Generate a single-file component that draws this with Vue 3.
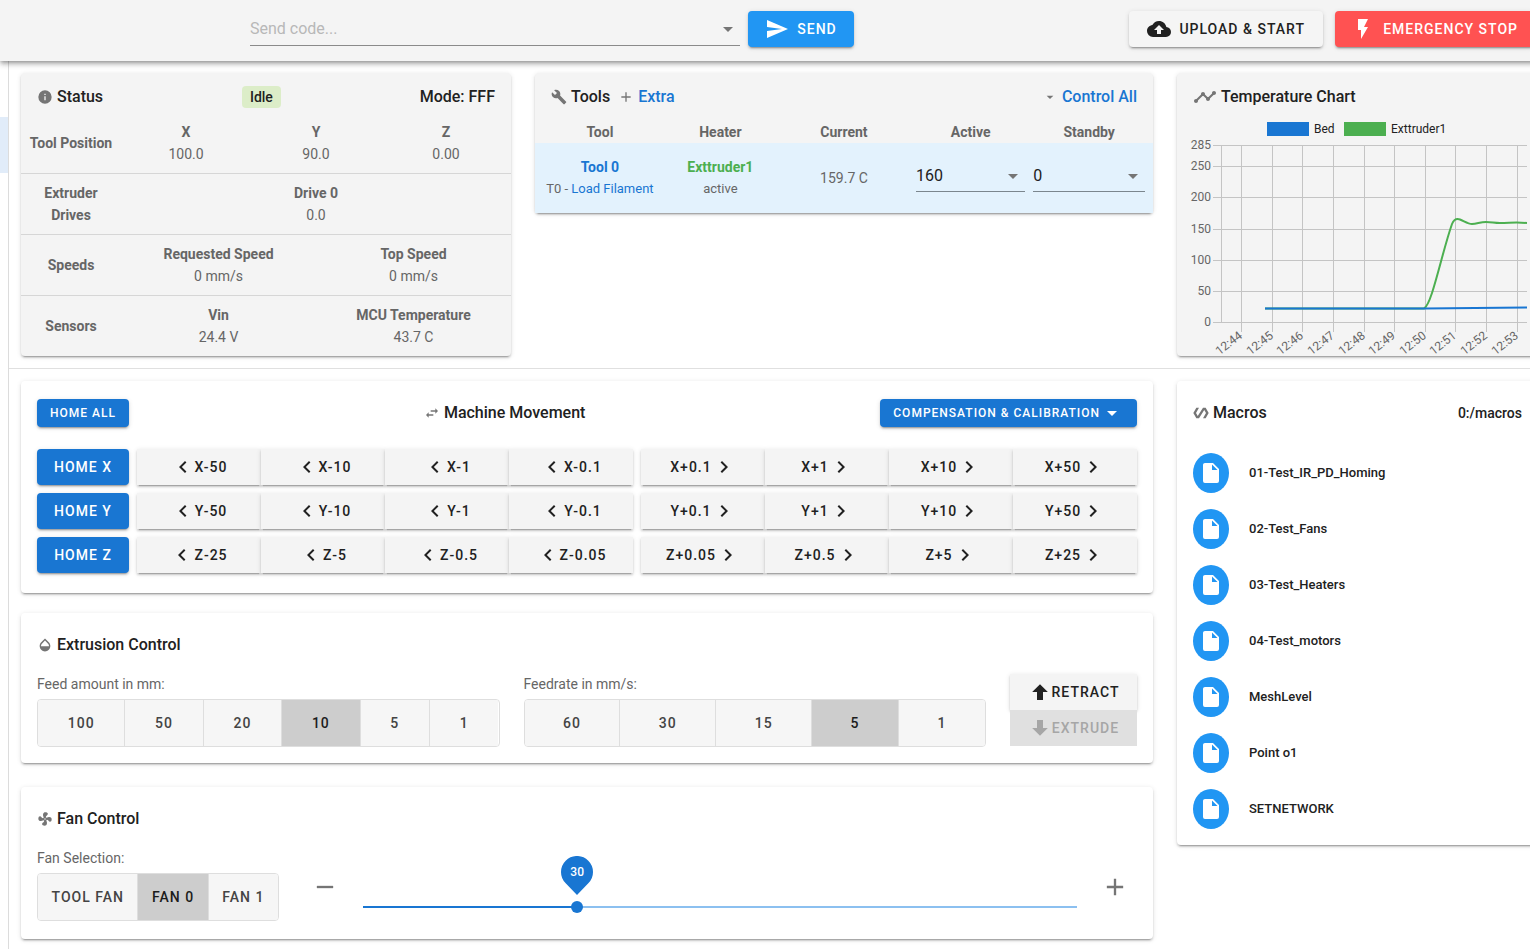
<script setup>
import { ref, computed } from 'vue'

const icons = {
  info: 'M13,9H11V7H13M13,17H11V11H13M12,2A10,10 0 0,0 2,12A10,10 0 0,0 12,22A10,10 0 0,0 22,12A10,10 0 0,0 12,2Z',
  send: 'M2,21L23,12L2,3V10L17,12L2,14V21Z',
  cloud: 'M14,13V17H10V13H7L12,8L17,13M19.35,10.03C18.67,6.59 15.64,4 12,4C9.11,4 6.6,5.64 5.35,8.03C2.34,8.36 0,10.9 0,14A6,6 0 0,0 6,20H19A5,5 0 0,0 24,15C24,12.36 21.95,10.22 19.35,10.03Z',
  flash: 'M7,2V13H10V22L17,10H13L17,2H7Z',
  wrench: 'M22.7,19L13.6,9.9C14.5,7.6 14,4.9 12.1,3C10.1,1 7.1,0.6 4.7,1.7L9,6L6,9L1.6,4.7C0.4,7.1 0.9,10.1 2.9,12.1C4.8,14 7.5,14.5 9.8,13.6L18.9,22.7C19.3,23.1 19.9,23.1 20.3,22.7L22.6,20.4C23.1,20 23.1,19.3 22.7,19Z',
  plus: 'M19,13H13V19H11V13H5V11H11V5H13V11H19V13Z',
  minus: 'M19,13H5V11H19V13Z',
  menuDown: 'M7,10L12,15L17,10H7Z',
  timeline: 'M23,8C23,9.1 22.1,10 21,10C20.82,10 20.65,9.97 20.5,9.93L16.93,13.5C16.97,13.65 17,13.82 17,14C17,15.1 16.1,16 15,16C13.9,16 13,15.1 13,14C13,13.82 13.03,13.65 13.07,13.5L10.5,10.93C10.35,10.97 10.18,11 10,11C9.82,11 9.65,10.97 9.5,10.93L4.93,15.5C4.97,15.65 5,15.82 5,16C5,17.1 4.1,18 3,18C1.9,18 1,17.1 1,16C1,14.9 1.9,14 3,14C3.18,14 3.35,14.03 3.5,14.07L8.07,9.5C8.03,9.35 8,9.18 8,9C8,7.9 8.9,7 10,7C11.1,7 12,7.9 12,9C12,9.18 11.97,9.35 11.93,9.5L14.5,12.07C14.65,12.03 14.82,12 15,12C15.18,12 15.35,12.03 15.5,12.07L19.07,8.5C19.03,8.35 19,8.18 19,8C19,6.9 19.9,6 21,6C22.1,6 23,6.9 23,8Z',
  swap: 'M21,9L17,5V8H10V10H17V13M7,11L3,15L7,19V16H14V14H7V11Z',
  opacity: 'M17.66,8L12,2.35L6.34,8C4.78,9.56 4,11.64 4,13.64C4,15.64 4.78,17.75 6.34,19.31C7.9,20.87 9.95,21.66 12,21.66C14.05,21.66 16.1,20.87 17.66,19.31C19.22,17.75 20,15.64 20,13.64C20,11.64 19.22,9.56 17.66,8M6,14C6,12 6.62,10.73 7.76,9.6L12,5.27L16.24,9.65C17.38,10.77 18,12 18,14H6Z',
  fan: 'M12,11A1,1 0 0,0 11,12A1,1 0 0,0 12,13A1,1 0 0,0 13,12A1,1 0 0,0 12,11M12.5,2C17,2 17.11,5.57 14.75,6.75C13.76,7.24 13.32,8.29 13.13,9.22C13.61,9.42 14.03,9.73 14.35,10.13C18.05,8.13 22.03,8.92 22.03,12.5C22.03,17 18.46,17.1 17.28,14.73C16.78,13.74 15.72,13.3 14.79,13.11C14.59,13.59 14.28,14 13.88,14.34C15.87,18.03 15.08,22 11.5,22C7,22 6.91,18.42 9.27,17.24C10.25,16.75 10.69,15.71 10.89,14.79C10.4,14.59 9.97,14.27 9.65,13.87C5.96,15.85 2,15.07 2,11.5C2,7 5.56,6.89 6.74,9.26C7.24,10.25 8.29,10.68 9.22,10.87C9.41,10.39 9.73,9.97 10.14,9.65C8.15,5.96 8.94,2 12.5,2Z',
  polymer: 'M19,4H15L7.1,16.63L4.5,12L9,4H5L0.5,12L5,20H9L16.89,7.37L19.5,12L15,20H19L23.5,12L19,4Z',
  file: 'M13,9V3.5L18.5,9M6,2C4.89,2 4,2.89 4,4V20A2,2 0 0,0 6,22H18A2,2 0 0,0 20,20V8L14,2H6Z',
  left: 'M15.41,16.58L10.83,12L15.41,7.41L14,6L8,12L14,18L15.41,16.58Z',
  right: 'M8.59,16.58L13.17,12L8.59,7.41L10,6L16,12L10,18L8.59,16.58Z',
  up: 'M15,20H9V12H4.16L12,4.16L19.84,12H15V20Z',
  down: 'M9,4H15V12H19.84L12,19.84L4.16,12H9V4Z'
}

const code = ref('')
const activeTemp = ref('160')
const standbyTemp = ref('0')

const axes = [
  { name: 'X', steps: ['50', '10', '1', '0.1'] },
  { name: 'Y', steps: ['50', '10', '1', '0.1'] },
  { name: 'Z', steps: ['25', '5', '0.5', '0.05'] }
]

const feedAmounts = [100, 50, 20, 10, 5, 1]
const feedAmount = ref(10)
const feedRates = [60, 30, 15, 5, 1]
const feedRate = ref(5)

const fans = ['Tool Fan', 'Fan 0', 'Fan 1']
const fan = ref('Fan 0')
const fanValue = ref(30)
const fanPercent = computed(() => fanValue.value + '%')
const changeFan = (d) => {
  fanValue.value = Math.min(100, Math.max(0, Number(fanValue.value) + d))
}

const macros = [
  '01-Test_IR_PD_Homing', '02-Test_Fans', '03-Test_Heaters', '04-Test_motors',
  'MeshLevel', 'Point o1', 'SETNETWORK'
]

const yTicks = [
  { v: 285, y: 24 }, { v: 250, y: 45 }, { v: 200, y: 76 }, { v: 150, y: 108 },
  { v: 100, y: 139 }, { v: 50, y: 170 }, { v: 0, y: 201 }
]
const xTicks = [
  { t: '12:44', x: 64 }, { t: '12:45', x: 95 }, { t: '12:46', x: 125 }, { t: '12:47', x: 156 },
  { t: '12:48', x: 187 }, { t: '12:49', x: 217 }, { t: '12:50', x: 248 }, { t: '12:51', x: 278 },
  { t: '12:52', x: 309 }, { t: '12:53', x: 340 }
]
</script>

<template>
  <div class="app">
    <header class="bar">
      <form class="send" @submit.prevent>
        <div class="combo">
          <input v-model="code" type="text" placeholder="Send code..." aria-label="Send code" />
          <svg class="i24 grey" viewBox="0 0 24 24"><path :d="icons.menuDown" /></svg>
        </div>
        <button type="submit" class="btn send-btn">
          <svg class="i24" viewBox="0 0 24 24"><path :d="icons.send" /></svg>Send
        </button>
      </form>
      <div class="bar-actions">
        <button type="button" class="btn light">
          <svg class="i24" viewBox="0 0 24 24"><path :d="icons.cloud" /></svg>Upload &amp; Start
        </button>
        <button type="button" class="btn stop">
          <svg class="i24" viewBox="0 0 24 24"><path :d="icons.flash" /></svg>Emergency Stop
        </button>
      </div>
    </header>

    <div class="body">
      <nav class="drawer" aria-label="Navigation"><span class="drawer-active"></span></nav>
      <main class="content">
        <div class="row top">
          <section class="card tinted">
            <div class="head spread">
              <h2 class="title"><svg class="i16 grey" viewBox="0 0 24 24"><path :d="icons.info" /></svg>Status</h2>
              <span class="chip">Idle</span>
              <span class="title">Mode: FFF</span>
            </div>
            <table class="status">
              <colgroup><col class="label-col" /><col v-for="n in 6" :key="n" /></colgroup>
              <tbody>
                <tr>
                  <th scope="row">Tool Position</th>
                  <td colspan="2"><strong>X</strong>100.0</td>
                  <td colspan="2"><strong>Y</strong>90.0</td>
                  <td colspan="2"><strong>Z</strong>0.00</td>
                </tr>
                <tr>
                  <th scope="row">Extruder Drives</th>
                  <td colspan="6"><strong>Drive 0</strong>0.0</td>
                </tr>
                <tr>
                  <th scope="row">Speeds</th>
                  <td colspan="3"><strong>Requested Speed</strong>0 mm/s</td>
                  <td colspan="3"><strong>Top Speed</strong>0 mm/s</td>
                </tr>
                <tr>
                  <th scope="row">Sensors</th>
                  <td colspan="3"><strong>Vin</strong>24.4 V</td>
                  <td colspan="3"><strong>MCU Temperature</strong>43.7 C</td>
                </tr>
              </tbody>
            </table>
          </section>

          <section class="card tinted start">
            <div class="head spread">
              <div class="group">
                <h2 class="title"><svg class="i16 grey" viewBox="0 0 24 24"><path :d="icons.wrench" /></svg>Tools</h2>
                <a href="#" class="title link"><svg class="i16 grey" viewBox="0 0 24 24"><path :d="icons.plus" /></svg>Extra</a>
              </div>
              <a href="#" class="title link"><svg class="i16 grey" viewBox="0 0 24 24"><path :d="icons.menuDown" /></svg>Control All</a>
            </div>
            <table class="tools">
              <colgroup>
                <col class="c-tool" /><col class="c-heater" /><col class="c-current" /><col class="c-active" /><col />
              </colgroup>
              <thead>
                <tr><th>Tool</th><th>Heater</th><th>Current</th><th>Active</th><th>Standby</th></tr>
              </thead>
              <tbody>
                <tr>
                  <td><a href="#" class="strong">Tool 0</a><small>T0 - <a href="#">Load Filament</a></small></td>
                  <td><a href="#" class="strong green">Exttruder1</a><small>active</small></td>
                  <td>159.7 C</td>
                  <td>
                    <div class="pick">
                      <select v-model="activeTemp" aria-label="Active temperature"><option>160</option><option>0</option></select>
                      <svg class="i24 grey" viewBox="0 0 24 24"><path :d="icons.menuDown" /></svg>
                    </div>
                  </td>
                  <td>
                    <div class="pick">
                      <select v-model="standbyTemp" aria-label="Standby temperature"><option>0</option><option>160</option></select>
                      <svg class="i24 grey" viewBox="0 0 24 24"><path :d="icons.menuDown" /></svg>
                    </div>
                  </td>
                </tr>
              </tbody>
            </table>
          </section>

          <section class="card tinted">
            <div class="head">
              <h2 class="title"><svg class="i24 grey" viewBox="0 0 24 24"><path :d="icons.timeline" /></svg>Temperature Chart</h2>
            </div>
            <svg class="chart" viewBox="0 0 361 234" role="img" aria-label="Temperature Chart">
              <rect x="90" y="1" width="42" height="14" fill="#1976d2" />
              <text class="legend" x="137" y="12">Bed</text>
              <rect x="167" y="1" width="42" height="14" fill="#4caf50" />
              <text class="legend" x="214" y="12">Exttruder1</text>
              <g class="grid">
                <path v-for="t in yTicks" :key="t.v" :d="`M36,${t.y + 0.5}H350`" />
                <path d="M44.5,24V202" />
                <path v-for="t in xTicks" :key="t.t" :d="`M${t.x + 0.5},24V211`" />
              </g>
              <text v-for="t in yTicks" :key="t.v" class="tick" x="34" :y="t.y + 4">{{ t.v }}</text>
              <text v-for="t in xTicks" :key="t.t" class="tick" :transform="`translate(${t.x + 2} 216) rotate(-38)`">{{ t.t }}</text>
              <path class="line green-line" d="M88,187.5H247C250,186 252,181 255,172C262,150 268,123 275,103C277,98 280,97.5 283,98.5C287,100 291,103 295,103C300,103 303,101 309,101C315,101 317,102 323,102C333,102 338,101 350,102" />
              <path class="line blue-line" d="M88,187.5H247L350,186.5" />
            </svg>
          </section>
        </div>

        <hr class="rule" />

        <div class="row bottom">
          <div class="stack">
            <section class="card move">
              <div class="spread">
                <button type="button" class="btn primary small home">Home All</button>
                <h2 class="title"><svg class="i16 grey" viewBox="0 0 24 24"><path :d="icons.swap" /></svg>Machine Movement</h2>
                <button type="button" class="btn primary small">
                  Compensation &amp; Calibration<svg class="i24" viewBox="0 0 24 24"><path :d="icons.menuDown" /></svg>
                </button>
              </div>
              <div class="axes">
                <div v-for="a in axes" :key="a.name" class="axis">
                  <button type="button" class="btn primary home">Home {{ a.name }}</button>
                  <div class="steps">
                    <button v-for="s in a.steps" :key="s" type="button" class="btn step">
                      <svg class="i24" viewBox="0 0 24 24"><path :d="icons.left" /></svg>{{ a.name }}-{{ s }}
                    </button>
                  </div>
                  <div class="steps">
                    <button v-for="s in [...a.steps].reverse()" :key="s" type="button" class="btn step">
                      {{ a.name }}+{{ s }}<svg class="i24" viewBox="0 0 24 24"><path :d="icons.right" /></svg>
                    </button>
                  </div>
                </div>
              </div>
            </section>

            <section class="card panel">
              <h2 class="title"><svg class="i16 grey" viewBox="0 0 24 24"><path :d="icons.opacity" /></svg>Extrusion Control</h2>
              <div class="extrusion">
                <div class="field">
                  <span id="amount" class="label">Feed amount in mm:</span>
                  <div class="toggle" role="group" aria-labelledby="amount">
                    <button v-for="v in feedAmounts" :key="v" type="button" :class="{ on: v === feedAmount }" @click="feedAmount = v">{{ v }}</button>
                  </div>
                </div>
                <div class="field">
                  <span id="rate" class="label">Feedrate in mm/s:</span>
                  <div class="toggle" role="group" aria-labelledby="rate">
                    <button v-for="v in feedRates" :key="v" type="button" :class="{ on: v === feedRate }" @click="feedRate = v">{{ v }}</button>
                  </div>
                </div>
                <div class="feed">
                  <button type="button" class="btn step"><svg class="i24" viewBox="0 0 24 24"><path :d="icons.up" /></svg>Retract</button>
                  <button type="button" class="btn step" disabled><svg class="i24" viewBox="0 0 24 24"><path :d="icons.down" /></svg>Extrude</button>
                </div>
              </div>
            </section>

            <section class="card panel fan-card">
              <h2 class="title"><svg class="i16 grey" viewBox="0 0 24 24"><path :d="icons.fan" /></svg>Fan Control</h2>
              <div class="fan-row">
                <div class="field">
                  <span id="fansel" class="label">Fan Selection:</span>
                  <div class="toggle fans" role="group" aria-labelledby="fansel">
                    <button v-for="f in fans" :key="f" type="button" :class="{ on: f === fan }" @click="fan = f">{{ f }}</button>
                  </div>
                </div>
                <button type="button" class="icon-btn" aria-label="Decrease" @click="changeFan(-5)">
                  <svg class="i28 grey" viewBox="0 0 24 24"><path :d="icons.minus" /></svg>
                </button>
                <div class="slider">
                  <div class="rail"><div class="fill" :style="{ width: fanPercent }"></div></div>
                  <div class="bubble" :style="{ left: fanPercent }">
                    <svg viewBox="0 0 32 39"><path d="M16,39L4.7,27.3A16,16 0 1,1 27.3,27.3Z" /></svg>
                    <output>{{ fanValue }}</output>
                  </div>
                  <input v-model="fanValue" type="range" min="0" max="100" aria-label="Fan speed" />
                </div>
                <button type="button" class="icon-btn" aria-label="Increase" @click="changeFan(5)">
                  <svg class="i28 grey" viewBox="0 0 24 24"><path :d="icons.plus" /></svg>
                </button>
              </div>
            </section>
          </div>

          <section class="card macros">
            <div class="macro-head spread">
              <h2 class="title"><svg class="i16 grey" viewBox="0 0 24 24"><path :d="icons.polymer" /></svg>Macros</h2>
              <span class="path">0:/macros</span>
            </div>
            <ul>
              <li v-for="m in macros" :key="m">
                <a href="#">
                  <span class="avatar"><svg class="i24" viewBox="0 0 24 24"><path :d="icons.file" /></svg></span>{{ m }}
                </a>
              </li>
            </ul>
          </section>
        </div>
      </main>
    </div>
  </div>
</template>

<style>
body {
  margin: 0;
  background: #fff;
}
</style>

<style scoped>
.app {
  min-height: 100vh;
  display: flex;
  flex-direction: column;
  overflow: hidden;
  font-family: Roboto, sans-serif;
  font-size: 14px;
  line-height: 22px;
  color: #212121;
}
.app *, .app *::before { box-sizing: border-box; }
svg { fill: currentColor; flex: none; }
button, input, select { font: inherit; color: inherit; }
a { color: #1976d2; text-decoration: none; }
.i16 { width: 16px; height: 16px; }
.i24 { width: 24px; height: 24px; }
.i28 { width: 28px; height: 28px; }
.grey { color: #757575; }

.bar {
  width: calc(100% + 8px);
  height: 61px;
  padding: 0 4px 3px 250px;
  display: flex;
  align-items: center;
  justify-content: space-between;
  background: #f4f4f4;
  box-shadow: 0 2px 4px -1px rgba(0, 0, 0, 0.3), 0 4px 5px rgba(0, 0, 0, 0.14), 0 1px 8px rgba(0, 0, 0, 0.12);
  z-index: 1;
}
.send { display: flex; align-items: center; gap: 8px; }
.combo {
  width: 490px;
  height: 34px;
  display: flex;
  align-items: center;
  border-bottom: 1px solid #8a8a8a;
}
.combo input {
  flex: 1;
  min-width: 0;
  padding: 0;
  border: 0;
  outline: 0;
  background: none;
  font-size: 16px;
}
.combo input::placeholder { color: #b8b8b8; opacity: 1; }
.bar-actions { display: flex; gap: 12px; }

.btn {
  height: 36px;
  padding: 0 16px;
  border: 0;
  border-radius: 4px;
  display: inline-flex;
  align-items: center;
  justify-content: center;
  gap: 8px;
  font-size: 14px;
  font-weight: 500;
  letter-spacing: 1px;
  text-transform: uppercase;
  white-space: nowrap;
  box-shadow: 0 3px 1px -2px rgba(0, 0, 0, 0.2), 0 2px 2px rgba(0, 0, 0, 0.14), 0 1px 5px rgba(0, 0, 0, 0.12);
}
.send-btn { min-width: 106px; background: #2196f3; color: #fff; }
.light { min-width: 194px; background: #f5f5f5; }
.stop { background: #ff5252; color: #fff; }
.primary { background: #1976d2; color: #fff; }
.small { height: 28px; padding: 0 13px; font-size: 12px; gap: 0; }
.home { width: 92px; padding: 0; }

.body { flex: 1; display: flex; width: calc(100% + 8px); }
.drawer {
  width: 9px;
  flex: none;
  padding-top: 56px;
  border-right: 1px solid #dcdcdc;
}
.drawer-active { display: block; height: 56px; background: #e1ecf9; }
.content { flex: 1; min-width: 0; }
.row { display: grid; gap: 24px; padding-left: 12px; }
.top { grid-template-columns: 490fr 618fr 361fr; padding-top: 12px; }
.bottom { grid-template-columns: 1132fr 361fr; align-items: start; padding-bottom: 10px; }
.rule { margin: 12px 0; border: 0; border-top: 1px solid #e0e0e0; }

.card {
  min-width: 0;
  border-radius: 4px;
  background: #fff;
  box-shadow: 0 3px 1px -2px rgba(0, 0, 0, 0.2), 0 2px 2px rgba(0, 0, 0, 0.14), 0 1px 5px rgba(0, 0, 0, 0.12);
}
.tinted { background: #f4f4f4; }
.start { align-self: start; }
.head { height: 48px; padding: 0 16px; }
.spread, .group { display: flex; align-items: center; justify-content: space-between; }
.group { gap: 8px; }
.title {
  margin: 0;
  display: flex;
  align-items: center;
  gap: 4px;
  font-size: 16px;
  font-weight: 500;
  line-height: 24px;
}
.head > h2 { height: 48px; }
.chip {
  padding: 0 8px;
  border-radius: 4px;
  background: #dcedc8;
  font-weight: 500;
}

table { width: 100%; table-layout: fixed; border-collapse: separate; border-spacing: 0; color: #666; }
th, strong { font-weight: 700; }
td, th { text-align: center; }
.label-col { width: 100px; }
.status th, .status td { padding: 8px 4px; border-bottom: 1px solid #d6d6d6; }
.status tr:first-child > * { padding-top: 0; }
.status tr:last-child > * { border-bottom: 0; }
.status strong { display: block; }

.c-tool { width: 21%; }
.c-heater { width: 18%; }
.c-current { width: 22%; }
.c-active { width: 19%; }
.tools th { padding: 0 4px; }
.tools td { height: 70px; padding: 0 4px; background: #e3f2fd; }
.tools td:last-child, .tools th:last-child { padding-right: 8px; }
.tools small { display: block; font-size: 13px; }
.strong { display: block; font-weight: 700; }
.green { color: #4caf50; }
.pick { display: grid; align-items: center; border-bottom: 1px solid #7b868e; padding-bottom: 3px; color: #212121; }
.pick > * { grid-area: 1 / 1; }
.pick .i24 { justify-self: end; pointer-events: none; }
.pick select {
  width: 100%;
  height: 22px;
  padding: 0;
  border: 0;
  outline: 0;
  background: none;
  appearance: none;
  font-size: 16px;
}

.chart { display: block; width: 100%; overflow: visible; }
.legend { font-size: 12px; fill: #212121; }
.tick { font-size: 12px; fill: #666; text-anchor: end; }
.grid path { stroke: #c4c4c4; stroke-width: 1; fill: none; }
.line { fill: none; stroke-width: 2; }
.green-line { stroke: #4caf50; }
.blue-line { stroke: #1976d2; }

.stack { min-width: 0; display: grid; gap: 20px; }
.move { padding: 18px 16px 20px; }
.axes { margin-top: 22px; display: grid; gap: 8px; }
.axis { display: grid; grid-template-columns: 92px 1fr 1fr; gap: 8px; }
.steps { display: grid; grid-template-columns: repeat(4, 1fr); }
.step { min-width: 0; border-radius: 0; padding: 0; background: #f4f4f4; gap: 0; }
.step:disabled { background: #e0e0e0; color: #a6a6a6; box-shadow: none; }

.panel { padding: 20px 16px 16px; }
.extrusion { margin-top: 16px; display: grid; grid-template-columns: 1fr 1fr 127px; gap: 24px; align-items: center; }
.field { display: grid; gap: 4px; }
.label { color: #666; }
.feed { display: grid; }
.toggle {
  height: 48px;
  display: flex;
  border: 1px solid #dedede;
  border-radius: 4px;
  overflow: hidden;
}
.toggle button {
  flex: 1 1 auto;
  padding: 0 12px;
  border: 0;
  border-left: 1px solid #dedede;
  background: #f6f6f6;
  color: #444;
  font-weight: 500;
  letter-spacing: 1px;
  text-transform: uppercase;
}
.toggle button:first-child { border-left: 0; }
.toggle .on { background: #cdcdcd; color: #1c1c1c; }
.toggle.fans { min-width: 242px; }

.fan-card { margin-top: 4px; padding-bottom: 18px; }
.fan-row { margin-top: 16px; display: flex; align-items: flex-end; }
.icon-btn {
  margin: 0 4px 16px 8px;
  width: 36px;
  height: 36px;
  padding: 4px;
  border: 0;
  background: none;
}
.fan-row .field + .icon-btn { margin-left: 28px; margin-right: 20px; }
.slider { position: relative; flex: 1; height: 28px; margin-right: 12px; }
.rail { position: absolute; left: 0; right: 0; top: 13px; height: 2px; background: #8cc0f0; }
.fill { height: 2px; background: #1976d2; }
.slider input {
  position: absolute;
  left: -6px;
  top: 0;
  width: calc(100% + 12px);
  height: 28px;
  margin: 0;
  appearance: none;
  background: none;
}
.slider input::-webkit-slider-thumb {
  appearance: none;
  width: 12px;
  height: 12px;
  border-radius: 50%;
  background: #1976d2;
}
.bubble { position: absolute; bottom: 26px; width: 32px; height: 39px; margin-left: -16px; color: #1976d2; }
.bubble svg { display: block; width: 32px; height: 39px; }
.bubble output {
  position: absolute;
  inset: 0 0 7px;
  display: grid;
  place-items: center;
  color: #fff;
  font-size: 12px;
  font-weight: 500;
}

.macro-head { height: 64px; padding: 0 16px; }
.path { font-size: 14px; font-weight: 500; }
.macros { padding-bottom: 8px; }
.macros ul { margin: 0; padding: 0; list-style: none; }
.macros a {
  height: 56px;
  padding: 0 16px;
  display: flex;
  align-items: center;
  gap: 20px;
  color: #212121;
  font-size: 13px;
  font-weight: 500;
}
.avatar {
  width: 36px;
  height: 40px;
  border-radius: 50%;
  display: grid;
  place-items: center;
  background: #2196f3;
  color: #fff;
}
</style>
